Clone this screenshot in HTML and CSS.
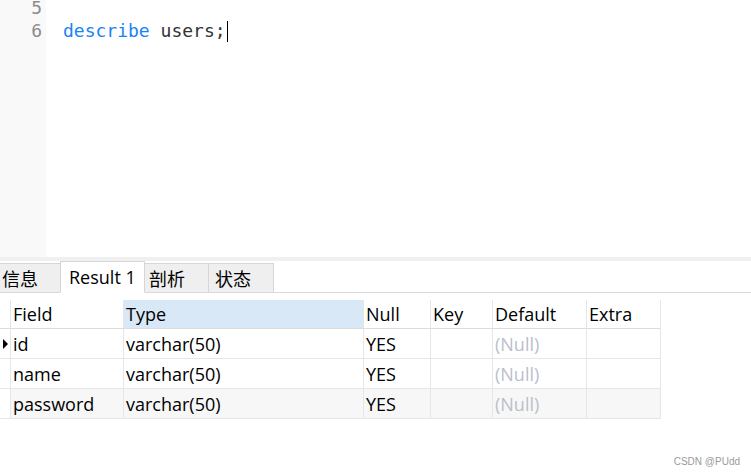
FILE: index.html
```
<!DOCTYPE html>
<html>
<head>
<meta charset="utf-8">
<link rel="stylesheet" href="styles.css">
</head>
<body>
<div class="editor">
  <div class="gutter">
    <div class="ln">5</div>
    <div class="ln">6</div>
  </div>
  <div class="code">
    <div class="line">&nbsp;</div>
    <div class="line"><span class="kw">describe</span> users;<span class="caret"></span></div>
  </div>
</div>
<div class="splitter"></div>
<div class="tabbar">
  <div class="tab tab-info">信息</div>
  <div class="tab active tab-result">Result 1</div>
  <div class="tab tab-prof">剖析</div>
  <div class="tab tab-status">状态</div>
</div>
<div class="grid">
  <div class="cell hd ind"></div>
  <div class="cell hd">Field</div>
  <div class="cell hd sel">Type</div>
  <div class="cell hd">Null</div>
  <div class="cell hd">Key</div>
  <div class="cell hd">Default</div>
  <div class="cell hd">Extra</div>

  <div class="cell ind"><span class="tri"></span></div>
  <div class="cell">id</div>
  <div class="cell">varchar(50)</div>
  <div class="cell">YES</div>
  <div class="cell"></div>
  <div class="cell null">(Null)</div>
  <div class="cell"></div>

  <div class="cell ind"></div>
  <div class="cell">name</div>
  <div class="cell">varchar(50)</div>
  <div class="cell">YES</div>
  <div class="cell"></div>
  <div class="cell null">(Null)</div>
  <div class="cell"></div>

  <div class="cell ind"></div>
  <div class="cell alt">password</div>
  <div class="cell alt">varchar(50)</div>
  <div class="cell alt">YES</div>
  <div class="cell alt"></div>
  <div class="cell alt null">(Null)</div>
  <div class="cell alt"></div>
</div>
<div class="watermark">CSDN @PUdd</div>
</body>
</html>
```
FILE: styles.css
```
html, body {
  margin: 0;
  padding: 0;
  background: #ffffff;
  width: 751px;
  height: 474px;
  overflow: hidden;
  position: relative;
}
body {
  font-family: "Open Sans", "Noto Sans CJK SC", sans-serif;
  color: #000;
}
.editor {
  display: flex;
  height: 257px;
  overflow: hidden;
}
.gutter {
  width: 46px;
  background: #f9f9f9;
  box-sizing: border-box;
  padding-right: 4px;
  margin-top: -4px;
  font-family: "DejaVu Sans Mono", monospace;
  font-size: 18px;
  line-height: 23px;
  color: #8c8c8c;
  text-align: right;
  height: 261px;
}
.code {
  flex: 1;
  margin-top: -4px;
  padding-left: 17px;
  font-family: "DejaVu Sans Mono", monospace;
  font-size: 18px;
  line-height: 23px;
  color: #333333;
}
.kw {
  color: #1a82f7;
}
.caret {
  display: inline-block;
  width: 1px;
  height: 21px;
  background: #000;
  vertical-align: -5px;
  margin-left: 1px;
}
.splitter {
  height: 4px;
  background: #f0f0f0;
}
.tabbar {
  display: flex;
  align-items: flex-end;
  height: 31px;
  border-bottom: 1px solid #d9d9d9;
  font-size: 18px;
}
.tab {
  box-sizing: border-box;
  height: 30px;
  background: #efefef;
  border-top: 1px solid #d6d6d6;
  border-right: 1px solid #d6d6d6;
  display: flex;
  align-items: center;
  padding-left: 6px;
  margin-bottom: -1px;
  border-bottom: 1px solid #d9d9d9;
  color: #000;
}
.tab-info { width: 60px; padding-left: 2px; border-right: none; }
.tab-result { width: 85px; padding-left: 8px; }
.tab-prof { width: 64px; padding-left: 4px; }
.tab-status { width: 65px; padding-left: 6px; }
.tab.active {
  height: 32px;
  background: #ffffff;
  border-left: 1px solid #d6d6d6;
  border-bottom: 1px solid #ffffff;
  padding-bottom: 0;
}
.grid {
  margin-top: 7px;
  display: grid;
  grid-template-columns: 11px 113px 240px 67px 62px 94px 74px;
  grid-auto-rows: 30px;
  grid-template-rows: 29px;
  font-size: 18px;
}
.cell {
  box-sizing: border-box;
  border-right: 1px solid #e6e6e6;
  border-bottom: 1px solid #e6e6e6;
  display: flex;
  align-items: center;
  padding-left: 2px;
  white-space: nowrap;
  overflow: hidden;
}
.cell.hd {
  border-bottom-color: #dcdcdc;
}
.cell.sel {
  background: #d9e8f6;
}
.cell.ind {
  padding-left: 0;
}
.cell.alt {
  background: #f7f7f7;
}
.cell.null {
  color: #b9c0cc;
}
.tri {
  display: block;
  width: 0;
  height: 0;
  margin-left: 3px;
  border-top: 5px solid transparent;
  border-bottom: 5px solid transparent;
  border-left: 5px solid #000;
}
.watermark {
  position: absolute;
  right: 11px;
  bottom: 7px;
  font-family: "Liberation Sans", sans-serif;
  font-size: 10px;
  color: #9a9a9a;
}
```
